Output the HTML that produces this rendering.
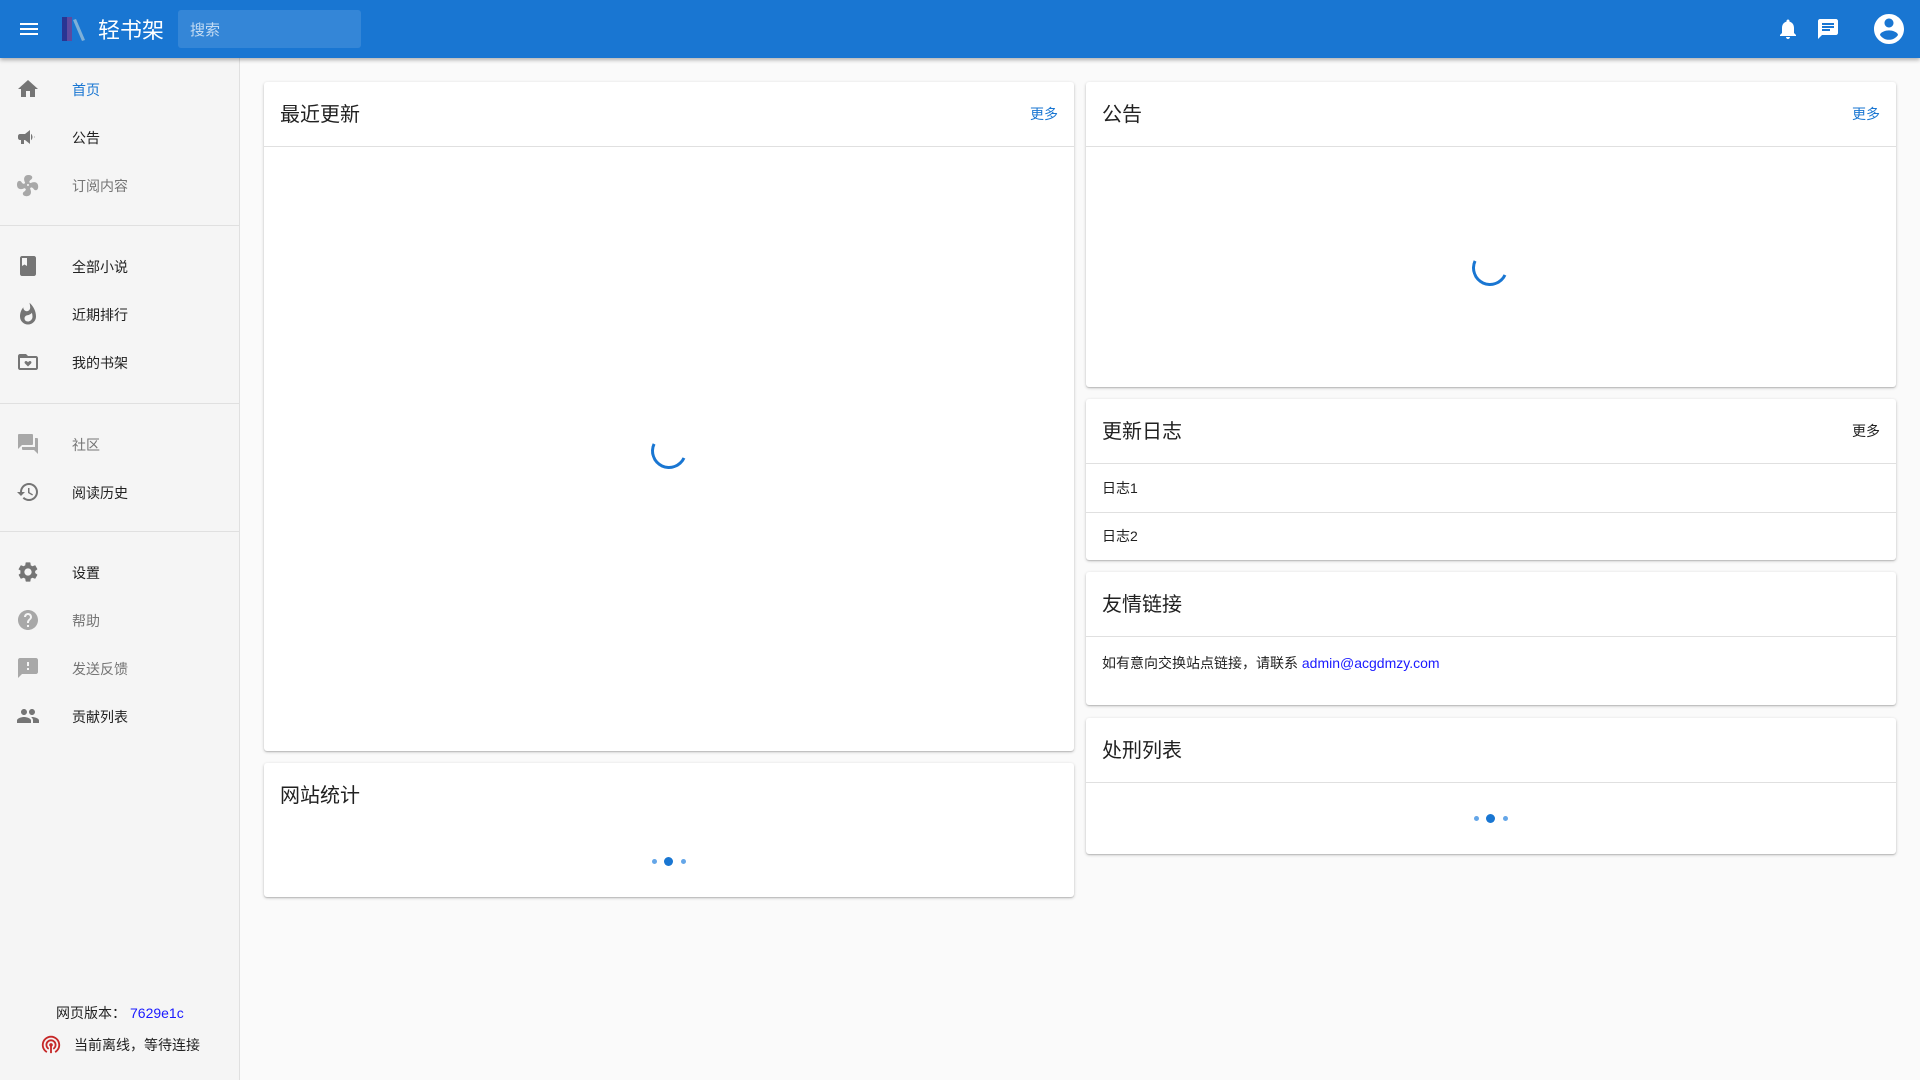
<!DOCTYPE html>
<html><head><meta charset="utf-8"><style>
*{margin:0;padding:0;box-sizing:border-box}
body{width:1920px;height:1080px;background:#fafafa;font-family:"Liberation Sans","Noto Sans CJK SC",sans-serif;position:relative;overflow:hidden;color:#212121}
.hdr{position:absolute;left:0;top:0;width:1920px;height:58px;background:#1976d2;box-shadow:0 2px 4px rgba(0,0,0,.3);z-index:5}
.side{position:absolute;left:0;top:58px;width:240px;height:1022px;background:#f5f5f5;border-right:1px solid #e0e0e0}
.ni{position:absolute;left:0;width:239px;height:40px}
.ni svg{position:absolute;left:16px;top:8px;width:24px;height:24px;fill:#757575}
.ni span{position:absolute;left:72px;top:11px;font-size:14px;color:#212121}
.dv{position:absolute;left:0;width:239px;height:1px;background:#e0e0e0}
.card{position:absolute;background:#fff;box-shadow:0 1px 3px rgba(0,0,0,.2),0 1px 1px rgba(0,0,0,.14);border-radius:3px}
.ct{position:absolute;left:16px;top:16px;font-size:20px;color:#212121}
.more{position:absolute;right:16px;top:22px;font-size:14px;color:#1976d2}
.ln{position:absolute;left:0;right:0;height:1px;background:#e0e0e0}
.sp{position:absolute;width:36px;height:36px;border:3px solid #1976d2;border-top-color:transparent;border-right-color:transparent;border-radius:50%;transform:rotate(-20deg)}
.dots{position:absolute;width:40px;height:10px}
.dots i{position:absolute;top:2px;width:5px;height:5px;border-radius:50%;background:#64a6e8}
.dots i.b{top:0;width:9px;height:9px;background:#1976d2;left:15px}
</style></head><body>
<div class="hdr">
<svg style="position:absolute;left:17px;top:17px" width="24" height="24" viewBox="0 0 24 24"><path fill="#fff" d="M3 6h18v2H3zm0 5h18v2H3zm0 5h18v2H3z"/></svg>
<svg style="position:absolute;left:61px;top:16px" width="26" height="26" viewBox="0 0 26 26"><rect x="1" y="1" width="5" height="24" fill="#283593"/><rect x="6" y="1" width="5" height="24" fill="#5c4aa0"/><path d="M12 4l3-1 9 21-3 1z" fill="#7fb0d8"/></svg>
<div style="position:absolute;left:98px;top:13px;font-size:22px;color:#fff">轻书架</div>
<div style="position:absolute;left:178px;top:10px;width:183px;height:38px;background:rgba(255,255,255,.12);border-radius:3px"><span style="position:absolute;left:12px;top:9px;font-size:15px;color:rgba(255,255,255,.7)">搜索</span></div>
<svg style="position:absolute;left:1776px;top:17px" width="24" height="24" viewBox="0 0 24 24"><path fill="#fff" d="M12 22c1.1 0 2-.9 2-2h-4c0 1.1.9 2 2 2zm6-6v-5c0-3.07-1.64-5.640-4.5-6.32V4c0-.83-.67-1.5-1.5-1.5s-1.5.67-1.5 1.5v.68C7.63 5.36 6 7.92 6 11v5l-2 2v1h16v-1l-2-2z"/></svg>
<svg style="position:absolute;left:1816px;top:17px" width="24" height="24" viewBox="0 0 24 24"><path fill="#fff" d="M20 2H4c-1.1 0-2 .9-2 2v18l4-4h14c1.1 0 2-.9 2-2V4c0-1.1-.9-2-2-2zM6 9h12v2H6zm8 5H6v-2h8zm4-6H6V6h12z"/></svg>
<svg style="position:absolute;left:1871px;top:11px" width="36" height="36" viewBox="0 0 24 24"><path fill="#fff" d="M12 2C6.48 2 2 6.48 2 12s4.48 10 10 10 10-4.480 10-10S17.52 2 12 2zm0 3c1.66 0 3 1.34 3 3s-1.34 3-3 3-3-1.34-3-3 1.34-3 3-3zm0 14.2c-2.5 0-4.71-1.28-6-3.22.03-1.99 4-3.08 6-3.08 1.99 0 5.97 1.09 6 3.08-1.29 1.94-3.5 3.22-6 3.22z"/></svg>
</div>
<div class="side">
<div class="ni" style="top:11px"><svg viewBox="0 0 24 24"><path d="M10 20v-6h4v6h5v-8h3L12 3 2 12h3v8z"/></svg><span style="color:#1976d2">首页</span></div>
<div class="ni" style="top:59px"><svg viewBox="0 0 24 24"><path d="M18 11v2h0c.6-.5.6-1.5 0-2zM4 9h5l5-4v14l-5-4H8v4H5v-4H4c-1.1 0-2-.9-2-2v-2c0-1.1.9-2 2-2zm12.5 3c0 1.3-.6 2.5-1.5 3.3V8.7c.9.8 1.5 2 1.5 3.3z"/></svg><span>公告</span></div>
<div class="ni" style="top:107px"><svg viewBox="0 0 24 24" style="opacity:.6"><path d="M12 11c-.55 0-1 .45-1 1s.45 1 1 1 1-.45 1-1-.45-1-1-1zm.5-9C17 2 17.1 5.5 14.8 6.7c-1 .5-1.4 1.5-1.6 2.5.5.2.9.5 1.3.9 3.7-2 7.7-1.1 7.7 3.4 0 4.5-3.5 4.6-4.7 2.3-.5-1-1.5-1.4-2.6-1.6-.2.5-.5.9-.9 1.3 2 3.7 1.1 7.7-3.4 7.7-4.5 0-4.6-3.5-2.3-4.7 1-.5 1.4-1.5 1.6-2.5-.5-.2-.9-.5-1.3-.9C4.9 17.1 1 16.2 1 11.7c0-4.5 3.5-4.6 4.7-2.3.5 1 1.5 1.4 2.5 1.6.2-.5.5-.9.9-1.3C7.1 6 8 2 12.5 2z"/></svg><span style="color:#757575">订阅内容</span></div>
<div class="dv" style="top:167px"></div>
<div class="ni" style="top:188px"><svg viewBox="0 0 24 24"><path d="M18 2H6c-1.1 0-2 .9-2 2v16c0 1.1.9 2 2 2h12c1.1 0 2-.9 2-2V4c0-1.1-.9-2-2-2zM6 4h5v8l-2.5-1.5L6 12V4z"/></svg><span>全部小说</span></div>
<div class="ni" style="top:236px"><svg viewBox="0 0 24 24"><path d="M13.5.7s.7 2.6.7 4.8c0 2-1.3 3.7-3.4 3.7-2 0-3.5-1.7-3.5-3.7v-.3C5.3 7.6 4 10.9 4 14.5 4 18.9 7.6 22.5 12 22.5s8-3.6 8-8C20 9.1 17.4 4.3 13.5.7zM11.7 19.5c-1.8 0-3.2-1.4-3.2-3.1 0-1.6 1-2.8 2.8-3.1 1.8-.4 3.6-1.2 4.6-2.6.4 1.3.6 2.6.6 4 0 2.6-2.2 4.8-4.8 4.8z"/></svg><span>近期排行</span></div>
<div class="ni" style="top:284px"><svg viewBox="0 0 24 24"><path d="M20 6h-8l-2-2H4c-1.1 0-2 .9-2 2v12c0 1.1.9 2 2 2h16c1.1 0 2-.9 2-2V8c0-1.1-.9-2-2-2zm0 12H4V8h16v10zm-8-1.5l3-3c.6-.6.6-1.5 0-2.1-.6-.6-1.5-.6-2.1 0l-.9.9-.9-.9c-.6-.6-1.5-.6-2.1 0-.6.6-.6 1.5 0 2.1z"/></svg><span>我的书架</span></div>
<div class="dv" style="top:345px"></div>
<div class="ni" style="top:366px"><svg viewBox="0 0 24 24" style="opacity:.6"><path d="M21 6h-2v9H6v2c0 .55.45 1 1 1h11l4 4V7c0-.55-.45-1-1-1zm-4 6V3c0-.55-.45-1-1-1H3c-.55 0-1 .45-1 1v14l4-4h10c.55 0 1-.45 1-1z"/></svg><span style="color:#757575">社区</span></div>
<div class="ni" style="top:414px"><svg viewBox="0 0 24 24"><path d="M13 3c-4.97 0-9 4.03-9 9H1l3.89 3.89.07.14L9 12H6c0-3.87 3.13-7 7-7s7 3.13 7 7-3.13 7-7 7c-1.93 0-3.68-.79-4.94-2.060l-1.42 1.42C8.27 19.99 10.51 21 13 21c4.97 0 9-4.03 9-9s-4.03-9-9-9zm-1 5v5l4.28 2.54.72-1.21-3.5-2.08V8H12z"/></svg><span>阅读历史</span></div>
<div class="dv" style="top:473px"></div>
<div class="ni" style="top:494px"><svg viewBox="0 0 24 24"><path d="M19.14 12.94c.04-.3.06-.61.06-.94 0-.32-.02-.64-.07-.94l2.03-1.58c.18-.14.23-.41.12-.61l-1.92-3.32c-.12-.22-.37-.29-.59-.22l-2.39.96c-.5-.38-1.03-.7-1.62-.94l-.36-2.54c-.04-.24-.24-.41-.48-.41h-3.84c-.24 0-.43.17-.47.41l-.36 2.54c-.59.24-1.13.57-1.62.94l-2.39-.96c-.22-.08-.47 0-.59.22L2.74 8.87c-.12.21-.8.47.12.61l2.03 1.58c-.5.3-.7.62-.7.94s.2.64.7.94l-2.03 1.58c-.18.14-.23.41-.12.61l1.92 3.32c.12.22.37.29.59.22l2.39-.96c.5.38 1.03.7 1.62.94l.36 2.54c.5.24.24.41.48.41h3.84c.24 0 .44-.17.47-.41l.36-2.54c.59-.24 1.13-.56 1.62-.94l2.39.96c.22.08.47 0 .59-.22l1.92-3.32c.12-.22.07-.47-.12-.61l-2.01-1.58zM12 15.6c-1.98 0-3.6-1.62-3.6-3.6s1.62-3.6 3.6-3.6 3.6 1.62 3.6 3.6-1.62 3.6-3.6 3.6z"/></svg><span>设置</span></div>
<div class="ni" style="top:542px"><svg viewBox="0 0 24 24" style="opacity:.6"><path d="M12 2C6.48 2 2 6.48 2 12s4.48 10 10 10 10-4.48 10-10S17.52 2 12 2zm1 17h-2v-2h2v2zm2.07-7.75l-.9.92C13.45 12.9 13 13.5 13 15h-2v-.5c0-1.1.45-2.1 1.17-2.83l1.24-1.26c.37-.36.59-.86.59-1.41 0-1.1-.9-2-2-2s-2 .9-2 2H8c0-2.21 1.79-4 4-4s4 1.79 4 4c0 .88-.36 1.68-.93 2.25z"/></svg><span style="color:#757575">帮助</span></div>
<div class="ni" style="top:590px"><svg viewBox="0 0 24 24" style="opacity:.6"><path d="M20 2H4c-1.1 0-2 .9-2 2v18l4-4h14c1.1 0 2-.9 2-2V4c0-1.1-.9-2-2-2zm-7 12h-2v-2h2v2zm0-4h-2V6h2v4z"/></svg><span style="color:#757575">发送反馈</span></div>
<div class="ni" style="top:638px"><svg viewBox="0 0 24 24"><path d="M16 11c1.66 0 2.99-1.34 2.99-3S17.66 5 16 5c-1.66 0-3 1.34-3 3s1.34 3 3 3zm-8 0c1.66 0 2.99-1.34 2.99-3S9.66 5 8 5C6.34 5 5 6.34 5 8s1.34 3 3 3zm0 2c-2.33 0-7 1.17-7 3.5V19h14v-2.5c0-2.33-4.67-3.5-7-3.5zm8 0c-.29 0-.62.02-.97.05 1.16.84 1.97 1.970 1.97 3.45V19h6v-2.5c0-2.33-4.67-3.5-7-3.5z"/></svg><span>贡献列表</span></div>
<div style="position:absolute;left:56px;top:945px;font-size:14px">网页版本：<span style="color:#1a1aff;margin-left:4px">7629e1c</span></div>
<svg style="position:absolute;left:40px;top:975px" width="22" height="22" viewBox="0 0 24 24"><path fill="#c62828" d="M12 11c-1.1 0-2 .9-2 2 0 .74.4 1.38 1 1.72V22h2v-7.28c.6-.35 1-.98 1-1.72 0-1.1-.9-2-2-2zm0-4c-3.3 0-6 2.7-6 6 0 2.2 1.2 4.1 3 5.2l1-1.7c-1.2-.7-2-2-2-3.5 0-2.2 1.8-4 4-4s4 1.8 4 4c0 1.5-.8 2.8-2 3.5l1 1.7c1.8-1.1 3-3 3-5.2 0-3.3-2.7-6-6-6zm0-4C6.5 3 2 7.5 2 13c0 3.7 2 6.9 5 8.7l1-1.7c-2.4-1.4-4-4-4-7 0-4.4 3.6-8 8-8s8 3.6 8 8c0 3-1.6 5.6-4 7l1 1.7c3-1.7 5-5 5-8.7 0-5.5-4.5-10-10-10z"/></svg>
<div style="position:absolute;left:74px;top:977px;font-size:14px">当前离线，等待连接</div>
</div>

<div class="card" style="left:264px;top:82px;width:810px;height:669px"><div class="ct">最近更新</div><div class="more">更多</div><div class="ln" style="top:64px"></div><div class="sp" style="left:387px;top:351px"></div></div>
<div class="card" style="left:264px;top:763px;width:810px;height:134px"><div class="ct">网站统计</div><div class="dots" style="left:385px;top:94px"><i style="left:3px"></i><i class="b"></i><i style="left:32px"></i></div></div>

<div class="card" style="left:1086px;top:82px;width:810px;height:305px"><div class="ct">公告</div><div class="more">更多</div><div class="ln" style="top:64px"></div><div class="sp" style="left:386px;top:168px"></div></div>
<div class="card" style="left:1086px;top:399px;width:810px;height:161px"><div class="ct">更新日志</div><div class="more" style="color:#212121">更多</div><div class="ln" style="top:64px"></div>
<div style="position:absolute;left:16px;top:79px;font-size:14px">日志1</div><div class="ln" style="top:113px"></div><div style="position:absolute;left:16px;top:127px;font-size:14px">日志2</div></div>
<div class="card" style="left:1086px;top:572px;width:810px;height:133px"><div class="ct">友情链接</div><div class="ln" style="top:64px"></div><div style="position:absolute;left:16px;top:81px;font-size:14px">如有意向交换站点链接，请联系 <span style="color:#1a1aff">admin@acgdmzy.com</span></div></div>
<div class="card" style="left:1086px;top:718px;width:810px;height:136px"><div class="ct">处刑列表</div><div class="ln" style="top:64px"></div><div class="dots" style="left:385px;top:96px"><i style="left:3px"></i><i class="b"></i><i style="left:32px"></i></div></div>
</body></html>
